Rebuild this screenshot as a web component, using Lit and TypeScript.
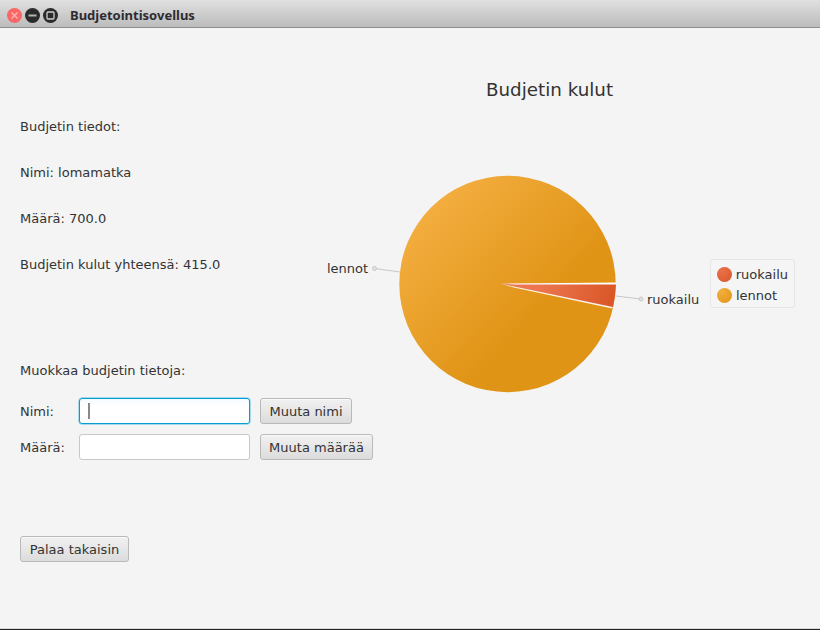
import { LitElement, css, html, svg } from 'lit';
import { customElement, property } from 'lit/decorators.js';

@customElement('budget-button')
export class BudgetButton extends LitElement {
  @property({ type: String })
  label: string = '';

  static override styles = css`
    :host { display: inline-flex; }
    button {
      width: 100%;
      height: 26px;
      padding: 0 8px;
      border: 1px solid #b9b9b9;
      border-radius: 3px;
      background: linear-gradient(#f1f1f1, #dcdcdc);
      box-shadow: inset 0 1px 0 #fafafa;
      color: #333;
      font: 13px "DejaVu Sans", sans-serif;
      white-space: nowrap;
    }
  `;

  override render() {
    return html`<button>${this.label}</button>`;
  }
}

@customElement('pie-chart')
export class PieChart extends LitElement {
  static override styles = css`
    :host {
      display: block;
      width: 500px;
      height: 600px;
      position: relative;
    }
    svg { display: block; }
    text {
      font-family: "DejaVu Sans", sans-serif;
      font-size: 13px;
      fill: #333;
    }
    .title { font-size: 18.3px; }
    .legend {
      position: absolute;
      left: 390px;
      top: 231px;
      width: 85px;
      height: 49px;
      box-sizing: border-box;
      padding: 7px 6px 0;
      display: flex;
      flex-direction: column;
      gap: 6px;
      border: 1px solid #e6e6e6;
      border-radius: 3px;
      background: #f5f5f5;
      font: 13px "DejaVu Sans", sans-serif;
      color: #333;
    }
    .entry { display: flex; align-items: center; gap: 4px; height: 15px; }
    .dot { width: 15px; height: 15px; border-radius: 50%; }
    .red { background: radial-gradient(circle at 30% 25%, #ea7049, #d9572a); }
    .orange { background: radial-gradient(circle at 30% 25%, #f3ae3e, #e09416); }
  `;

  override render() {
    // viewBox uses window coordinates, this element starts at x=320, y=28
    return html`
      <svg width="500" height="600" viewBox="320 28 500 600">
        <defs>
          <linearGradient id="orange" gradientUnits="userSpaceOnUse" x1="420" y1="195" x2="540" y2="310">
            <stop offset="0" stop-color="#f5b043"></stop>
            <stop offset="1" stop-color="#e09416"></stop>
          </linearGradient>
          <linearGradient id="red" gradientUnits="userSpaceOnUse" x1="540" y1="285" x2="616" y2="300">
            <stop offset="0" stop-color="#ec7650"></stop>
            <stop offset="1" stop-color="#d95625"></stop>
          </linearGradient>
        </defs>
        <text class="title" x="549.5" y="96" text-anchor="middle">Budjetin kulut</text>
        ${this.renderLabels()}
        <circle cx="507.5" cy="284" r="108.2" fill="url(#orange)"></circle>
        <path d="M500 283.5 L616 283.5 A108.2 108.2 0 0 1 612.6 308 Z" fill="url(#red)"></path>
        <path d="M500 283.5 L616 282.6 L616 284.4 L515 284.4 Z" fill="#fff"></path>
        <path d="M500 283.5 L612.8 307 L612.3 308.6 L515 287.7 Z" fill="#fff" fill-opacity="0.92"></path>
      </svg>
      <div class="legend">
        <div class="entry"><span class="dot red"></span>ruokailu</div>
        <div class="entry"><span class="dot orange"></span>lennot</div>
      </div>
    `;
  }

  renderLabels() {
    return svg`
      <path d="M374.5 268.5 L400 272 M616 296 L641 299" fill="none" stroke="#c8c8c8" stroke-width="1"></path>
      <circle cx="374.5" cy="268.5" r="2" fill="#e2e2e2" stroke="#c8c8c8"></circle>
      <circle cx="641" cy="299" r="2" fill="#e2e2e2" stroke="#c8c8c8"></circle>
      <text x="327" y="273">lennot</text>
      <text x="647" y="304">ruokailu</text>
    `;
  }
}

@customElement('app-root')
export class AppRoot extends LitElement {
  static override styles = css`
    :host {
      display: flex;
      flex-direction: column;
      width: 820px;
      height: 630px;
      overflow: hidden;
      background: #f4f4f4;
      color: #333;
      font: 13px "DejaVu Sans", sans-serif;
    }
    .titlebar {
      flex: none;
      height: 28px;
      display: flex;
      align-items: center;
      padding: 3px 0 0 7px;
      box-sizing: border-box;
      border-bottom: 1px solid #8f8f8f;
      background: linear-gradient(#e0e0e0, #bcbcbc);
    }
    .wbtn { width: 15px; height: 15px; margin-right: 3px; flex: none; display: block; }
    .apptitle {
      margin-left: 9px;
      font: bold 13px "Noto Sans", sans-serif;
      color: #2d2a33;
    }
    .main {
      flex: 1;
      display: flex;
      border-bottom: 1px solid #222;
      box-shadow: inset 0 -1px 0 #d8d8d8;
    }
    .left {
      flex: none;
      width: 320px;
      box-sizing: border-box;
      padding: 91px 0 0 20px;
      display: flex;
      flex-direction: column;
      align-items: flex-start;
    }
    .line { height: 16px; line-height: 16px; margin-bottom: 30px; white-space: nowrap; }
    .spacer { margin-top: 60px; margin-bottom: 19px; }
    .row {
      display: flex;
      align-items: center;
      height: 26px;
      margin-bottom: 10px;
      white-space: nowrap;
    }
    .row label { width: 59px; flex: none; }
    .field {
      width: 171px;
      height: 26px;
      box-sizing: border-box;
      margin-right: 10px;
      flex: none;
      border: 1px solid #c8c8c8;
      border-radius: 3px;
      background: #fff;
      display: flex;
      align-items: center;
      padding-left: 8px;
    }
    .field.focused {
      border: 1px solid #039ed3;
      box-shadow: 0 0 0 0.5px #5cc0e4;
      background: linear-gradient(#f4fafd, #fff 30%);
    }
    .caret { width: 2px; height: 16px; background: #888; }
    .rename { width: 92px; }
    .amount { width: 113px; }
    .back { margin-top: 66px; width: 109px; }
  `;

  override render() {
    return html`
      <div class="titlebar">
        <svg class="wbtn" viewBox="0 0 15 15">
          <circle cx="7.5" cy="7.5" r="7.5" fill="#f96767"></circle>
          <path d="M4.5 4.5 L10.5 10.5 M10.5 4.5 L4.5 10.5" stroke="#fbb4b2" stroke-width="1.4"></path>
        </svg>
        <svg class="wbtn" viewBox="0 0 15 15">
          <circle cx="7.5" cy="7.5" r="7.5" fill="#2b2b2b"></circle>
          <rect x="3.5" y="6.5" width="8" height="2" fill="#b5b5b5"></rect>
        </svg>
        <svg class="wbtn" viewBox="0 0 15 15">
          <circle cx="7.5" cy="7.5" r="7.5" fill="#2b2b2b"></circle>
          <rect x="4" y="4" width="7" height="7" rx="1" fill="none" stroke="#d0d0d0" stroke-width="1.3"></rect>
        </svg>
        <span class="apptitle">Budjetointisovellus</span>
      </div>
      <div class="main">
        <div class="left">
          <div class="line">Budjetin tiedot:</div>
          <div class="line">Nimi: lomamatka</div>
          <div class="line">Määrä: 700.0</div>
          <div class="line">Budjetin kulut yhteensä: 415.0</div>
          <div class="line spacer">Muokkaa budjetin tietoja:</div>
          <div class="row">
            <label>Nimi:</label>
            <div class="field focused"><span class="caret"></span></div>
            <budget-button class="rename" label="Muuta nimi"></budget-button>
          </div>
          <div class="row">
            <label>Määrä:</label>
            <div class="field"></div>
            <budget-button class="amount" label="Muuta määrää"></budget-button>
          </div>
          <budget-button class="back" label="Palaa takaisin"></budget-button>
        </div>
        <pie-chart></pie-chart>
      </div>
    `;
  }
}
